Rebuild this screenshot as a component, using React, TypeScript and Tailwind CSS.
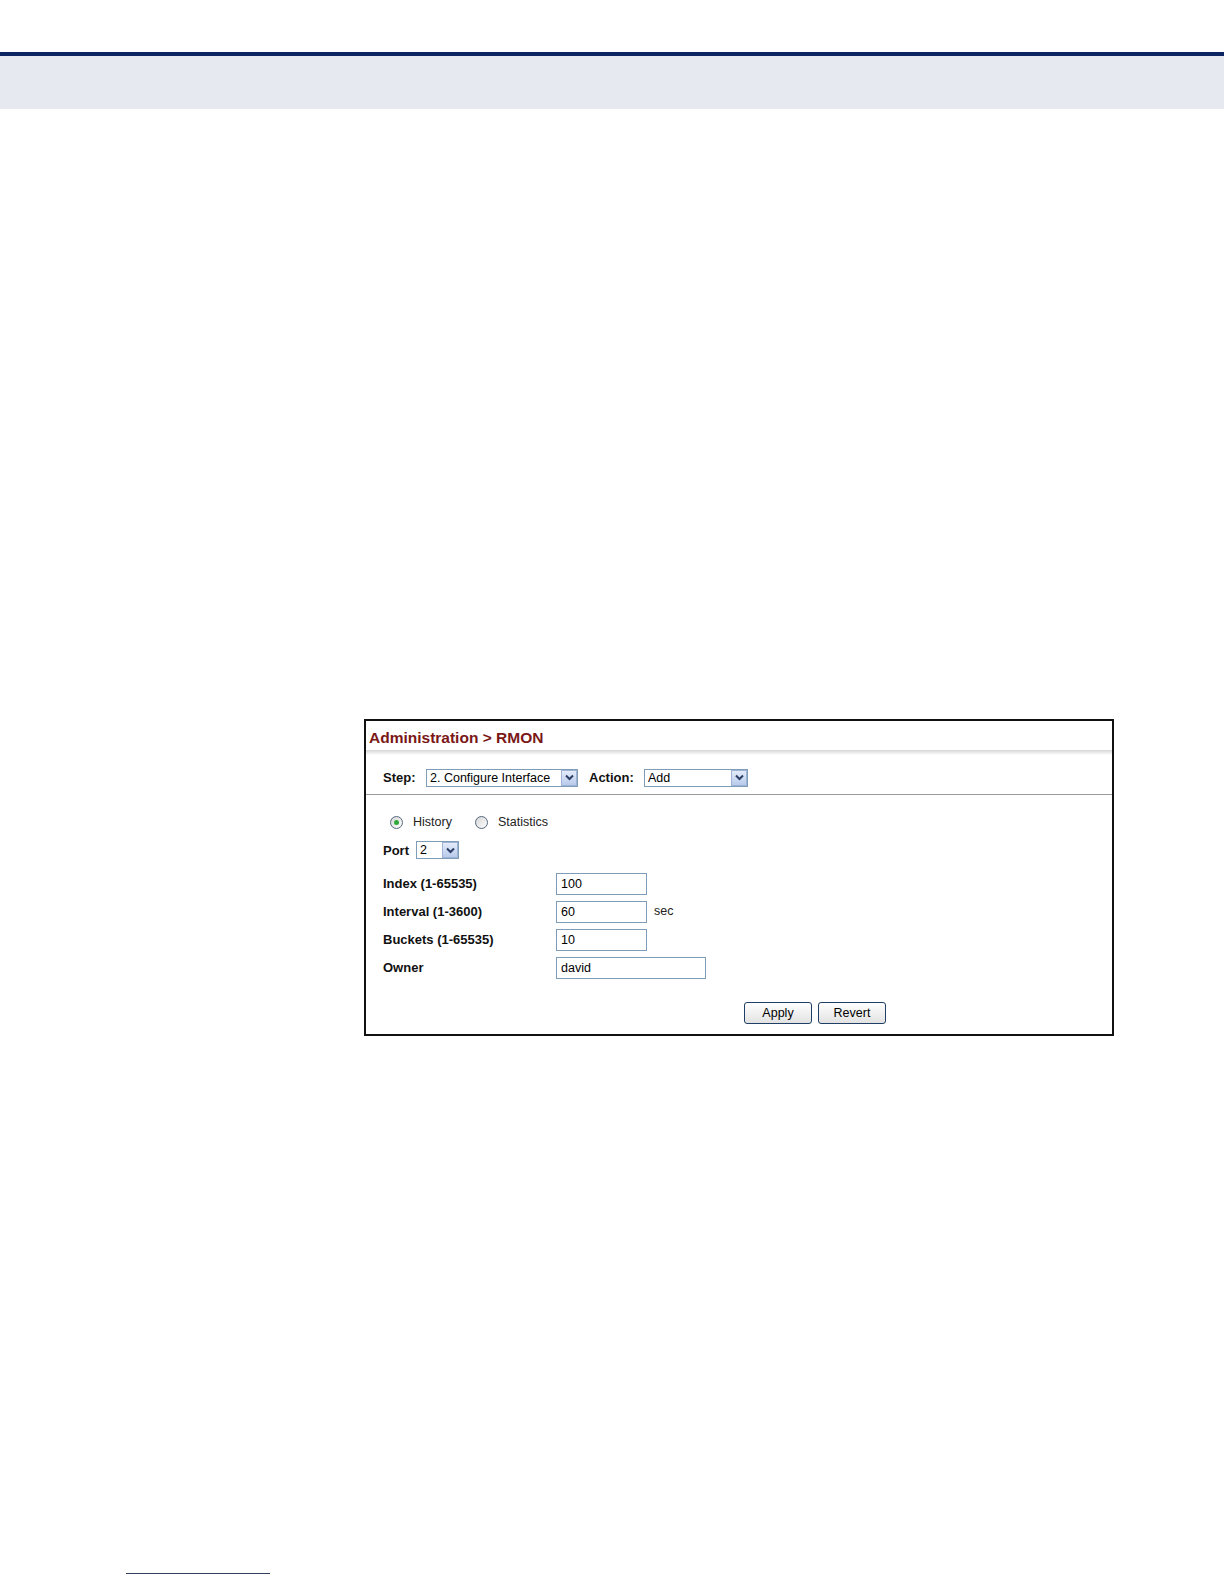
import * as React from "react";

const font = { fontFamily: '"Liberation Sans", Arial, sans-serif' };

function Arrow() {
  return (
    <span className="flex h-[16px] w-[16px] items-center justify-center border border-[#9fb3d6] bg-gradient-to-b from-[#e3ebf9] to-[#b9cbec]">
      <svg width="9" height="7" viewBox="0 0 9 7">
        <path d="M1 1.5 L4.5 5 L8 1.5" fill="none" stroke="#2c3e66" strokeWidth="2" />
      </svg>
    </span>
  );
}

function Select({ value, width }: { value: string; width: string }) {
  return (
    <div
      className={`flex h-[18px] items-center justify-between border border-[#7f9db9] bg-white pl-[3px] pr-0 text-[12.5px] text-black ${width}`}
    >
      <span className="whitespace-nowrap leading-none">{value}</span>
      <Arrow />
    </div>
  );
}

function Radio({ checked, label }: { checked?: boolean; label: string }) {
  return (
    <div className="flex h-[16px] items-center gap-[10px]">
      <span className="flex h-[13px] w-[13px] items-center justify-center rounded-full border border-[#55677e] bg-gradient-to-br from-[#d6d6d6] to-white">
        {checked && <span className="h-[5px] w-[5px] rounded-full bg-[#2fa83a]" />}
      </span>
      <span className="text-[12.5px] text-[#222]">{label}</span>
    </div>
  );
}

function Field({ label, value, wide, suffix }: { label: string; value: string; wide?: boolean; suffix?: string }) {
  return (
    <div className="flex h-[22px] items-center">
      <span className="w-[173px] text-[13px] font-bold text-[#111]">{label}</span>
      <div
        className={`flex h-[22px] items-center border border-[#7f9db9] bg-white px-[4px] text-[12.5px] text-black ${
          wide ? "w-[150px]" : "w-[91px]"
        }`}
      >
        {value}
      </div>
      {suffix && <span className="ml-[7px] -mt-[2px] text-[12.5px] text-[#222]">{suffix}</span>}
    </div>
  );
}

function Button({ label }: { label: string }) {
  return (
    <button
      type="button"
      className="h-[22px] w-[68px] rounded-[3px] border border-[#1f3f66] bg-gradient-to-b from-white to-[#e2e2e2] text-[12.5px] leading-none text-black"
    >
      {label}
    </button>
  );
}

export default function App() {
  return (
    <div className="relative h-[1584px] w-[1224px] bg-white" style={font}>
      <div className="pt-[52px]">
        <div className="h-[4px] bg-[#0c2461]" />
        <div className="h-[53px] bg-[#e6e9f0]" />
      </div>

      <div className="ml-[364px] mt-[610px] w-[750px] border-2 border-[#111] bg-white">
        <div className="pl-[3px] pt-[8px] pb-[3px] text-[15.5px] font-bold leading-[18px] text-[#7a1717]">
          Administration &gt; RMON
        </div>
        <div className="h-[5px] bg-gradient-to-b from-[#d6d6d6] to-white" />
        <div className="flex items-center pl-[17px] pt-[13px] pb-[6px]">
          <span className="w-[43px] text-[13px] font-bold text-[#111]">Step:</span>
          <Select value="2. Configure Interface" width="w-[152px]" />
          <span className="ml-[11px] w-[55px] text-[13px] font-bold text-[#111]">Action:</span>
          <Select value="Add" width="w-[104px]" />
        </div>
        <div className="h-px bg-[#9a9a9a]" />

        <div className="pl-[17px] pt-[20px] pb-[10px]">
          <div className="flex items-center gap-[23px] pl-[7px]">
            <Radio checked label="History" />
            <Radio label="Statistics" />
          </div>
          <div className="mt-[10px] flex items-center gap-[7px]">
            <span className="text-[13px] font-bold text-[#111]">Port</span>
            <Select value="2" width="w-[43px]" />
          </div>
          <div className="mt-[13px] flex flex-col gap-[6px]">
            <Field label="Index (1-65535)" value="100" />
            <Field label="Interval (1-3600)" value="60" suffix="sec" />
            <Field label="Buckets (1-65535)" value="10" />
            <Field label="Owner" value="david" wide />
          </div>
          <div className="mt-[23px] flex gap-[6px] pl-[361px]">
            <Button label="Apply" />
            <Button label="Revert" />
          </div>
        </div>
      </div>

      <div className="absolute left-[126px] top-[1573px] h-px w-[144px] bg-[#33415e]" />
    </div>
  );
}
